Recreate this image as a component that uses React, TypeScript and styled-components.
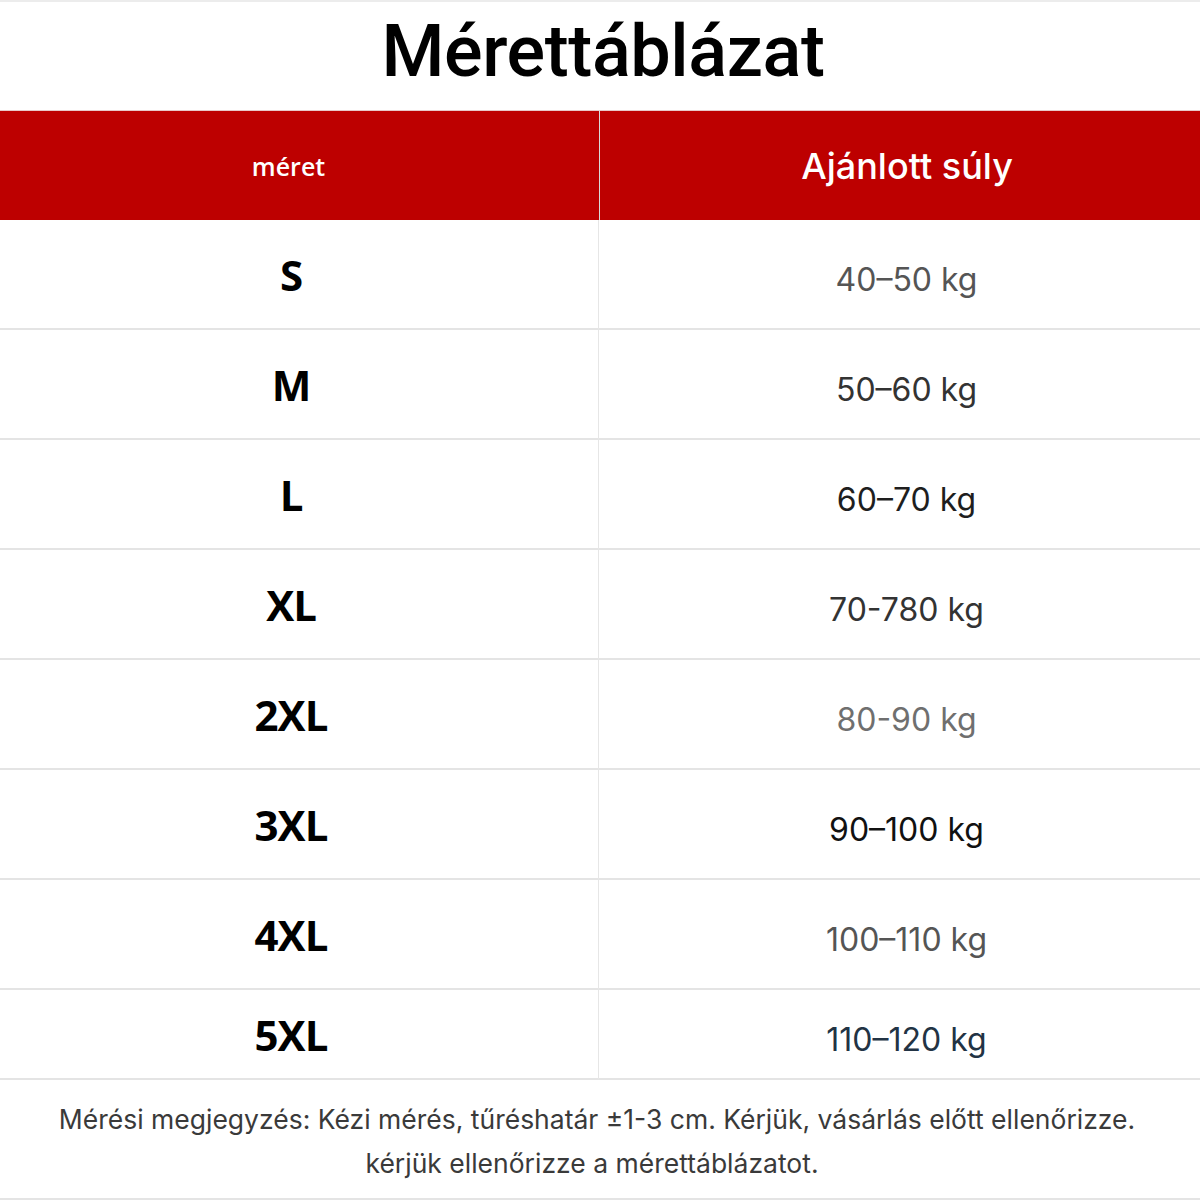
import React from "react";
import styled, { createGlobalStyle } from "styled-components";

const GlobalStyle = createGlobalStyle`
  html, body {
    margin: 0;
    padding: 0;
    background: #ffffff;
  }
  body {
    font-family: "Inter", "Liberation Sans", sans-serif;
  }
`;

const Page = styled.div`
  width: 1200px;
  height: 1200px;
  display: flex;
  flex-direction: column;
  background: #fff;
  border-top: 2px solid #ececec;
  box-sizing: border-box;
`;

const Title = styled.h1`
  margin: 0;
  height: 108px;
  display: flex;
  align-items: center;
  justify-content: center;
  padding-bottom: 10px;
  padding-left: 6px;
  box-sizing: border-box;
  font-family: "Roboto", "Liberation Sans", sans-serif;
  font-weight: 500;
  font-size: 72px;
  letter-spacing: -0.4px;
  color: #000;
`;

const Grid = styled.div`
  display: grid;
  grid-template-columns: 599px 1fr;
`;

const HeadCell = styled.div<{ $big?: boolean }>`
  height: 110px;
  background: #bd0000;
  border-top: 1px solid #e8c8c8;
  display: flex;
  align-items: center;
  justify-content: center;
  color: #fff;
  font-family: ${(p) => (p.$big ? `"Inter"` : `"Open Sans"`)}, "Liberation Sans", sans-serif;
  font-size: ${(p) => (p.$big ? "36px" : "25px")};
  font-weight: ${(p) => (p.$big ? 500 : 600)};
  padding-right: ${(p) => (p.$big ? "0px" : "22px")};
  padding-left: ${(p) => (p.$big ? "14px" : "0px")};
  box-sizing: border-box;
  & + & {
    border-left: 1px solid #d9d9d9;
  }
`;

const SizeCell = styled.div<{ $h: number }>`
  height: ${(p) => p.$h}px;
  border-bottom: 2px solid #e4e4e4;
  border-right: 1px solid #e6e6e6;
  display: flex;
  align-items: center;
  justify-content: center;
  padding-right: 16px;
  box-sizing: border-box;
  font-family: "Open Sans", "Liberation Sans", sans-serif;
  font-weight: 700;
  font-size: 42px;
  letter-spacing: -1px;
  color: #000;
`;

const WeightCell = styled.div<{ $h: number; $color: string }>`
  height: ${(p) => p.$h}px;
  border-bottom: 2px solid #e4e4e4;
  display: flex;
  align-items: center;
  justify-content: center;
  padding-left: 14px;
  padding-top: 10px;
  box-sizing: border-box;
  font-family: "Inter", "Liberation Sans", sans-serif;
  font-size: 32px;
  color: ${(p) => p.$color};
`;

const Note = styled.div`
  flex: 1;
  display: flex;
  flex-direction: column;
  align-items: center;
  justify-content: center;
  gap: 14px;
  padding-top: 4px;
  border-bottom: 2px solid #e4e4e4;
  font-family: "Inter", "Liberation Sans", sans-serif;
  font-size: 26.5px;
  color: #3a3a3a;
  line-height: 30px;
`;

const NoteLine = styled.div<{ $shift?: number }>`
  padding-right: ${(p) => p.$shift ?? 4}px;
`;

const rows = [
  { size: "S", weight: "40–50 kg", color: "#555555" },
  { size: "M", weight: "50–60 kg", color: "#333333" },
  { size: "L", weight: "60–70 kg", color: "#1e1e1e" },
  { size: "XL", weight: "70-780 kg", color: "#333333" },
  { size: "2XL", weight: "80-90 kg", color: "#6f6f6f" },
  { size: "3XL", weight: "90–100 kg", color: "#111111" },
  { size: "4XL", weight: "100–110 kg", color: "#555555" },
  { size: "5XL", weight: "110–120 kg", color: "#223344" },
];

export default function App() {
  return (
    <Page>
      <GlobalStyle />
      <Title>Mérettáblázat</Title>
      <Grid>
        <HeadCell>méret</HeadCell>
        <HeadCell $big>Ajánlott súly</HeadCell>
        {rows.map((r, i) => {
          const h = i === rows.length - 1 ? 90 : 110;
          return (
            <React.Fragment key={r.size}>
              <SizeCell $h={h}>{r.size}</SizeCell>
              <WeightCell $h={h} $color={r.color}>
                {r.weight}
              </WeightCell>
            </React.Fragment>
          );
        })}
      </Grid>
      <Note>
        <NoteLine $shift={6}>
          Mérési megjegyzés: Kézi mérés, tűréshatár ±1-3 cm. Kérjük, vásárlás előtt ellenőrizze.
        </NoteLine>
        <NoteLine $shift={16}>kérjük ellenőrizze a mérettáblázatot.</NoteLine>
      </Note>
    </Page>
  );
}
